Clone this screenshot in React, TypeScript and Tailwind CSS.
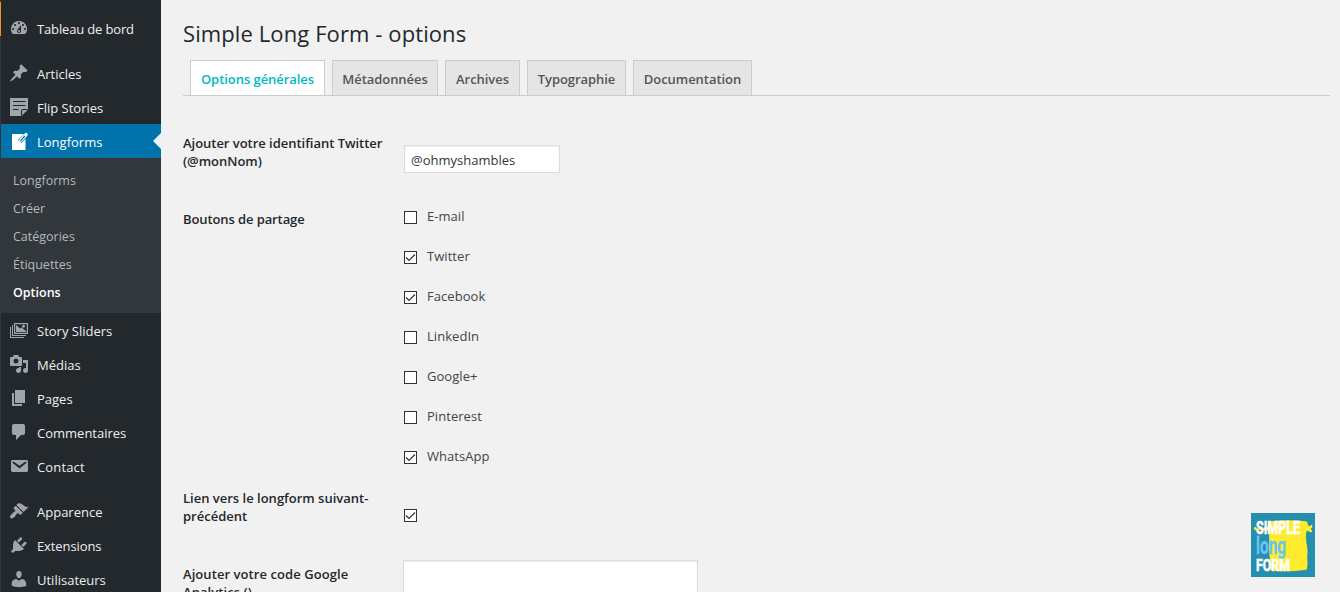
import type { ReactNode } from 'react';

const icons: Record<string, ReactNode> = {
  dashboard: (
    <path d="M3.76 16h12.48A7.998 7.998 0 0 0 10 3a7.998 7.998 0 0 0-6.24 13zM10 4c.55 0 1 .45 1 1s-.45 1-1 1-1-.45-1-1 .45-1 1-1zM6 6c.55 0 1 .45 1 1s-.45 1-1 1-1-.45-1-1 .45-1 1-1zm8 0c.55 0 1 .45 1 1s-.45 1-1 1-1-.45-1-1 .45-1 1-1zm-5.37 5.55L12 7v6c0 1.1-.9 2-2 2s-2-.9-2-2c0-.57.24-1.08.63-1.45zM4 10c.55 0 1 .45 1 1s-.45 1-1 1-1-.45-1-1 .45-1 1-1zm12 0c.55 0 1 .45 1 1s-.45 1-1 1-1-.45-1-1 .45-1 1-1zm-5 3c0-.55-.45-1-1-1s-1 .45-1 1 .45 1 1 1 1-.45 1-1z" />
  ),
  post: (
    <path d="M10.44 3.02l1.82-1.82 6.36 6.35-1.83 1.82c-1.05-.68-2.48-.57-3.41.36l-.75.75c-.92.93-1.04 2.35-.35 3.41l-1.83 1.82-2.41-2.41-2.8 2.79c-.42.42-3.38 2.71-3.8 2.29s1.86-3.39 2.28-3.81l2.79-2.79L4.1 9.36l1.83-1.82c1.05.69 2.48.57 3.4-.36l.75-.75c.93-.92 1.05-2.35.36-3.41z" />
  ),
  note: (
    <>
      <path d="M1 1h18v11.5L12.5 19H1z" />
      <path d="M4 4.5h12.5M4 8.5h12.5M4 12.5h5.5M12.5 18.5v-4.2q0-1.8 1.8-1.8h4.2" fill="none" stroke="#23282d" strokeWidth="1.1" />
    </>
  ),
  longform: (
    <>
      <path d="M3 3h13.5v16H3z" />
      <path d="M10.8 10.400 17 4" fill="none" stroke="#0073aa" strokeWidth="4.6" />
      <path d="M12 9 17 3.6" fill="none" stroke="#fff" strokeWidth="3.4" strokeLinecap="round" />
      <path d="M11.5 9.8 15.8 5" fill="none" stroke="#0073aa" strokeWidth="1.2" />
    </>
  ),
  slides: (
    <path fillRule="evenodd" d="M5 3h14v11H5zM6.2 4.2v8.6h11.6V4.2zM7 5l4 3.6 1.6-1.2L17 11v1H7zM14.5 4.8a1.5 1.5 0 1 1 0 3 1.5 1.5 0 0 1 0-3zM3 5h1v10h13v1H3zM1 7h1v10h13v1H1z" />
  ),
  media: (
    <path d="M13 11V4c0-.55-.45-1-1-1h-1.67L9 1H5L3.67 3H2c-.55 0-1 .45-1 1v7c0 .55.45 1 1 1h10c.55 0 1-.45 1-1zM7 4.5c1.38 0 2.5 1.12 2.5 2.5S8.38 9.5 7 9.5 4.5 8.38 4.5 7 5.62 4.5 7 4.5zM14 6h5v10.5c0 1.38-1.12 2.5-2.5 2.5S14 17.88 14 16.5s1.12-2.5 2.5-2.5c.17 0 .34.02.5.05V9h-3V6zm-4 8.05V13h2v3.5c0 1.38-1.12 2.5-2.5 2.5S7 17.88 7 16.5 8.12 14 9.5 14c.17 0 .34.02.5.05z" />
  ),
  page: <path d="M6 15V2h10v13H6zm-1 1h8v2H3V5h2v11z" />,
  comments: (
    <path d="M5 2h9c1.1 0 2 .9 2 2v7c0 1.1-.9 2-2 2h-2l-5 5v-5H5c-1.1 0-2-.9-2-2V4c0-1.1.9-2 2-2z" />
  ),
  email: (
    <path d="M3.87 4h13.25C18.37 4 19 4.59 19 5.79v8.42c0 1.19-.63 1.79-1.88 1.79H3.87c-1.25 0-1.88-.6-1.88-1.79V5.79c0-1.2.63-1.79 1.88-1.79zm6.62 8.6l6.74-5.53c.24-.2.43-.66.13-1.07-.29-.41-.82-.42-1.17-.17l-5.7 3.86L4.8 5.83c-.35-.25-.88-.24-1.17.17-.3.41-.11.87.13 1.07z" />
  ),
  brush: (
    <path d="M14.48 11.06L7.41 3.99l1.5-1.5c.5-.56 2.3-.47 3.51.32 1.21.8 1.43 1.28 2.91 2.1 1.18.64 2.45 1.26 4.45.85zm-.71.71L6.7 4.7 4.93 6.47c-.39.39-.39 1.02 0 1.41l1.06 1.06c.39.39.39 1.03 0 1.42-.6.6-1.43 1.11-2.21 1.69-.35.26-.7.53-1.01.84C1.43 14.23.4 16.08 1.4 17.07c.99 1 2.84-.03 4.18-1.36.31-.31.58-.66.85-1.02.57-.78 1.08-1.61 1.69-2.21.39-.39 1.02-.39 1.41 0l1.06 1.06c.39.39 1.02.39 1.41 0z" />
  ),
  plug: (
    <path d="M13.11 4.36L9.87 7.6 8 5.73l3.24-3.24c.35-.34 1.05-.2 1.56.32.52.51.66 1.21.31 1.55zm-8 1.77l.91-1.12 9.01 9.01-1.19.84c-.71.71-2.63 1.16-3.82 1.16H6.14L4.9 17.26c-.59.59-1.54.59-2.12 0-.59-.58-.59-1.53 0-2.12l1.24-1.24v-3.88c0-1.13.4-3.19 1.09-3.89zm7.26 3.97l3.24-3.24c.34-.35 1.04-.21 1.55.31.52.51.66 1.21.31 1.55l-3.24 3.25z" />
  ),
  user: (
    <path d="M10 9.25c-2.27 0-2.73-3.44-2.73-3.44C7 4.02 7.82 2 9.97 2c2.16 0 2.98 2.02 2.71 3.81 0 0-.41 3.44-2.68 3.44zm0 2.57L12.72 10c2.39 0 4.52 2.33 4.52 4.53v2.49s-3.65 1.13-7.24 1.13c-3.65 0-7.24-1.13-7.24-1.13v-2.49c0-2.25 1.94-4.48 4.47-4.48z" />
  ),
};

function MenuItem({ icon, label, current = false, tracking = '' }: { icon: string; label: string; current?: boolean; tracking?: string }) {
  return (
    <a className={`relative flex h-[34px] shrink-0 items-center pl-2 text-[13px] ${current ? 'bg-[#0073aa] text-white' : 'text-[#eee]'}`}>
      <svg viewBox="0 0 20 20" className={`size-5 ${current ? 'fill-white' : 'fill-[#a0a5aa]'}`}>
        {icons[icon]}
      </svg>
      <span className={`ml-2 pt-[3px] whitespace-nowrap ${tracking}`}>{label}</span>
      {current && (
        <span className="absolute top-[9px] right-0 size-0 border-y-8 border-r-8 border-y-transparent border-r-[#f1f1f1]" />
      )}
    </a>
  );
}

function Checkbox({ checked }: { checked: boolean }) {
  return (
    <span className="flex size-[13px] shrink-0 border border-[#333] bg-white">
      {checked && (
        <svg viewBox="0 0 11 11" className="size-[11px] fill-none stroke-[#333]" strokeWidth="1.2">
          <path d="M1 5.5 4 8.5 10 2.5" />
        </svg>
      )}
    </span>
  );
}

function Logo() {
  return (
    <svg viewBox="0 0 64 64" className="absolute top-[513px] left-[1251px] size-16" fontFamily="Roboto, 'Liberation Sans', sans-serif">
      <rect width="64" height="64" fill="#258fb0" />
      <path
        d="M2 15L5 13 6 15 16 14 18 8C28 6.500 46 6.500 56 8L58 13 61 11 62 14 60 16 62 18 60 20 56 18C54 26 57 32 57 39 56 46 58 52 56 57 45 59 30 59 20 58 17 53 19 47 18 41 17 33 19 26 17 18L6 17 4 18Z"
        fill="#ffeb2e"
        stroke="#1683bd"
        strokeWidth=".7"
      />
      <text x="5" y="20.5" fontSize="18" fontWeight="700" fill="#fff" stroke="#fff" strokeWidth=".6" textLength="44" lengthAdjust="spacingAndGlyphs">SIMPLE</text>
      <text x="5" y="40.5" fontSize="24" fontWeight="700" fill="#69c7ed" stroke="#69c7ed" strokeWidth=".3" textLength="30" lengthAdjust="spacingAndGlyphs">long</text>
      <text x="5" y="58" fontSize="17" fontWeight="700" fill="#fff" stroke="#fff" strokeWidth=".6" textLength="34" lengthAdjust="spacingAndGlyphs">FORM</text>
    </svg>
  );
}

const tabs = [
  { label: 'Options générales', width: 'w-[135px]' },
  { label: 'Métadonnées', width: 'w-[106px]' },
  { label: 'Archives', width: 'w-[75px]' },
  { label: 'Typographie', width: 'w-[99px]' },
  { label: 'Documentation', width: 'w-[119px]' },
];

const networks = [
  { label: 'E-mail', checked: false },
  { label: 'Twitter', checked: true },
  { label: 'Facebook', checked: true },
  { label: 'LinkedIn', checked: false },
  { label: 'Google+', checked: false },
  { label: 'Pinterest', checked: false },
  { label: 'WhatsApp', checked: true },
];

export default function App() {
  return (
    <div className="relative flex h-[592px] w-[1340px] overflow-hidden bg-[#f1f1f1] font-['Open_Sans','Noto_Sans',sans-serif] text-[13px] text-[#444]">
      <aside className="flex w-[161px] shrink-0 bg-[#23282d]">
        <div className="w-px shrink-0 bg-[#32373c] pt-[2px]">
          <div className="h-[34px] bg-[#f7931e]" />
        </div>
        <nav className="flex min-w-0 flex-1 flex-col pt-[11px]">
          <MenuItem icon="dashboard" label="Tableau de bord" tracking="tracking-[-0.15px]" />
          <div className="h-[11px] shrink-0" />
          <MenuItem icon="post" label="Articles" />
          <MenuItem icon="note" label="Flip Stories" />
          <MenuItem icon="longform" label="Longforms" current />
          <div className="flex h-[155px] shrink-0 flex-col bg-[#32373c] pt-[9px] pl-3 text-[12.5px] leading-[28px] text-[#b4b9be]">
            <a>Longforms</a>
            <a>Créer</a>
            <a>Catégories</a>
            <a>Étiquettes</a>
            <a className="font-semibold text-white">Options</a>
          </div>
          <MenuItem icon="slides" label="Story Sliders" />
          <MenuItem icon="media" label="Médias" />
          <MenuItem icon="page" label="Pages" />
          <MenuItem icon="comments" label="Commentaires" />
          <MenuItem icon="email" label="Contact" tracking="tracking-[0.15px]" />
          <div className="h-[11px] shrink-0" />
          <MenuItem icon="brush" label="Apparence" />
          <MenuItem icon="plug" label="Extensions" tracking="tracking-[-0.1px]" />
          <MenuItem icon="user" label="Utilisateurs" />
        </nav>
      </aside>

      <main className="flex min-w-0 flex-1 flex-col pr-[10px] pl-[22px]">
        <h1 className="mt-[18px] h-[31px] shrink-0 text-[22px] leading-[30px] tracking-[0.1px] whitespace-nowrap text-[#23282d]">
          Simple Long Form - options
        </h1>
        <div className="mt-[11px] flex h-9 shrink-0 gap-[7px] border-b border-[#ccc] pl-[7px]">
          {tabs.map((tab, i) => (
            <a
              key={tab.label}
              className={`flex h-[35px] items-center justify-center border border-b-0 border-[#ccc] pt-[3px] font-semibold tracking-[-0.05px] whitespace-nowrap ${tab.width} ${i === 0 ? 'bg-white text-[#00b9c6]' : 'bg-[#e5e5e5] text-[#555]'}`}
            >
              {tab.label}
            </a>
          ))}
        </div>

        <div className="mt-[38px] grid shrink-0 grid-cols-[220px_1fr] grid-rows-[76px_279px_76px_120px] leading-[18px]">
          <div className="font-semibold tracking-[-0.03px] text-[#23282d]">
            Ajouter votre identifiant Twitter
            <br />
            (@monNom)
          </div>
          <div className="pt-[11px] pl-px">
            <div className="flex h-[28px] w-[156px] items-center border border-[#ddd] bg-white pt-px pl-[6px] text-[#32373c] shadow-[inset_0_1px_2px_rgba(0,0,0,0.07)]">
              @ohmyshambles
            </div>
          </div>

          <div className="font-semibold tracking-[-0.1px] text-[#23282d]">Boutons de partage</div>
          <div className="flex flex-col pl-px">
            {networks.map((n) => (
              <label key={n.label} className="flex h-10 shrink-0 items-start">
                <span className="pt-px">
                  <Checkbox checked={n.checked} />
                </span>
                <span className="-mt-[3px] ml-[10px] tracking-[0.05px]">{n.label}</span>
              </label>
            ))}
          </div>

          <div className="font-semibold text-[#23282d]">
            Lien vers le longform suivant-
            <br />
            précédent
          </div>
          <div className="pt-5 pl-px">
            <Checkbox checked />
          </div>

          <div className="font-semibold tracking-[0.07px] text-[#23282d]">
            Ajouter votre code Google
            <br />
            Analytics ()
          </div>
          <div>
            <div className="-mt-[5px] h-[100px] w-[295px] border border-[#ddd] bg-white shadow-[inset_0_1px_2px_rgba(0,0,0,0.07)]" />
          </div>
        </div>
      </main>
      <Logo />
    </div>
  );
}
